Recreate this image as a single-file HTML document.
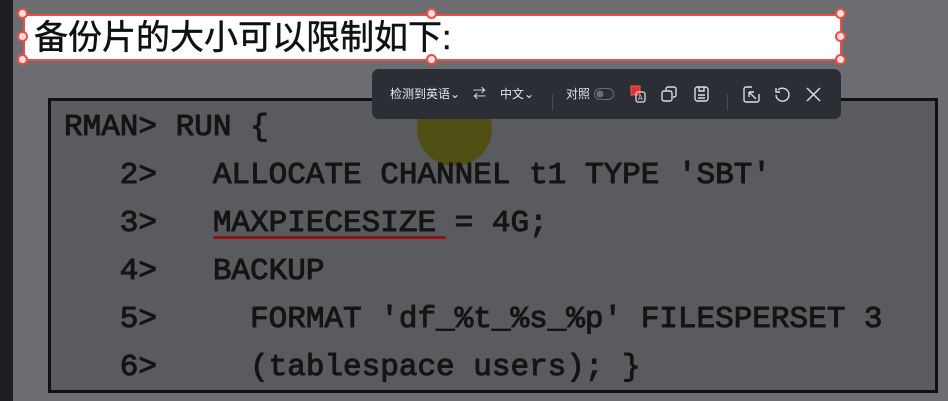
<!DOCTYPE html>
<html><head><meta charset="utf-8"><style>
*{margin:0;padding:0;box-sizing:border-box}
body{width:948px;height:401px;overflow:hidden;background:#6c6d70;position:relative;font-family:"Liberation Sans","Noto Sans CJK SC",sans-serif}
.strip{position:absolute;left:0;top:0;width:13px;height:401px;background:#1d1e21}
.box{position:absolute;left:48px;top:98px;width:890px;height:295px;background:#5a5b5e;border:3px solid #111}
.code{position:absolute;left:64px;font-family:"Liberation Mono",monospace;font-weight:normal;-webkit-text-stroke:1px #141414;font-size:31px;color:#141414;white-space:pre;line-height:1}
.ul{position:absolute;left:213px;top:236px;width:233px;height:3px;background:#8a1416;border-radius:2px}
.dot{position:absolute;left:417px;top:91px;width:75px;height:75px;border-radius:50%;background:#4f4f14}
.title{position:absolute;left:23px;top:14px;width:819px;height:47px;background:#fff;border:2px solid #ef4c44}
.title span{position:absolute;left:9px;top:2px;font-size:34px;color:#111;line-height:40px;-webkit-text-stroke:0.5px #111}
.h{position:absolute;width:11px;height:11px;border-radius:50%;background:#fbe0e0;border:2px solid #ef4c44}
.tb{position:absolute;left:372px;top:69px;width:469px;height:50px;background:#2b2e35;border-radius:7px;color:#e6e6e6;font-size:13px}
.tb .t{position:absolute;top:17px;line-height:16px}
.sep{position:absolute;top:25px;width:1px;height:16px;background:#4a4d55}
svg{position:absolute}
</style></head><body>
<div class="strip"></div>
<div class="box"></div>
<div class="dot"></div>
<div class="code" style="top:112px">RMAN&gt; RUN {</div>
<div class="code" style="top:160px">   2&gt;   ALLOCATE CHANNEL t1 TYPE 'SBT'</div>
<div class="code" style="top:208px">   3&gt;   MAXPIECESIZE = 4G;</div>
<div class="code" style="top:256px">   4&gt;   BACKUP</div>
<div class="code" style="top:304px">   5&gt;     FORMAT 'df_%t_%s_%p' FILESPERSET 3</div>
<div class="code" style="top:352px">   6&gt;     (tablespace users); }</div>
<div class="ul"></div>
<div class="title"><span>备份片的大小可以限制如下:</span></div>
<div class="h" style="left:17px;top:8px"></div>
<div class="h" style="left:426px;top:8px"></div>
<div class="h" style="left:835px;top:8px"></div>
<div class="h" style="left:17px;top:31px"></div>
<div class="h" style="left:835px;top:31px"></div>
<div class="h" style="left:17px;top:54px"></div>
<div class="h" style="left:426px;top:54px"></div>
<div class="h" style="left:835px;top:54px"></div>
<div class="tb">
<span class="t" style="left:18px;font-size:12px">检测到英语⌄</span>
<span class="t" style="left:101px">⇄</span>
<span class="t" style="left:128px;font-size:12px">中文⌄</span>
<div class="sep" style="left:180px"></div>
<span class="t" style="left:194px;font-size:12px">对照</span>
<svg style="left:222px;top:19px" width="20" height="12"><rect x="0.5" y="0.5" width="19" height="11" rx="5.5" fill="none" stroke="#6a6d75"/><circle cx="6" cy="6" r="3.5" fill="#6a6d75"/></svg>
<svg style="left:258px;top:16px" width="18" height="18"><rect x="1" y="1" width="9" height="9" fill="#d33" stroke="#f55"/><rect x="6" y="7" width="9" height="10" rx="2" fill="none" stroke="#ddd" stroke-width="1.3"/><text x="8" y="15" font-size="7" fill="#ddd" font-family="Liberation Sans">A</text></svg>
<svg style="left:289px;top:17px" width="17" height="17" fill="none" stroke="#ddd" stroke-width="1.4"><rect x="1" y="5" width="10" height="10" rx="2"/><path d="M5 4V3a2 2 0 0 1 2-2h6a2 2 0 0 1 2 2v6a2 2 0 0 1-2 2h-1"/></svg>
<svg style="left:322px;top:17px" width="16" height="17" fill="none" stroke="#ddd" stroke-width="1.4"><rect x="1" y="1" width="13" height="14" rx="2.5"/><path d="M5 1v4h5V1M4 9h7M4 12h7"/></svg>
<div class="sep" style="left:355px"></div>
<svg style="left:371px;top:17px" width="17" height="17" fill="none" stroke="#ddd" stroke-width="1.4"><path d="M9 1H3a2 2 0 0 0-2 2v11a2 2 0 0 0 2 2h11a2 2 0 0 0 2-2V8"/><path d="M6 6l7 7M6 6v5M6 6h5"/></svg>
<svg style="left:402px;top:17px" width="17" height="17" fill="none" stroke="#ddd" stroke-width="1.4"><path d="M4 4a6.5 6.5 0 1 1-2 5"/><path d="M2 2v4h4"/></svg>
<svg style="left:434px;top:18px" width="15" height="15" stroke="#ddd" stroke-width="1.5"><path d="M1 1l13 13M14 1L1 14"/></svg>
</div>
</body></html>
